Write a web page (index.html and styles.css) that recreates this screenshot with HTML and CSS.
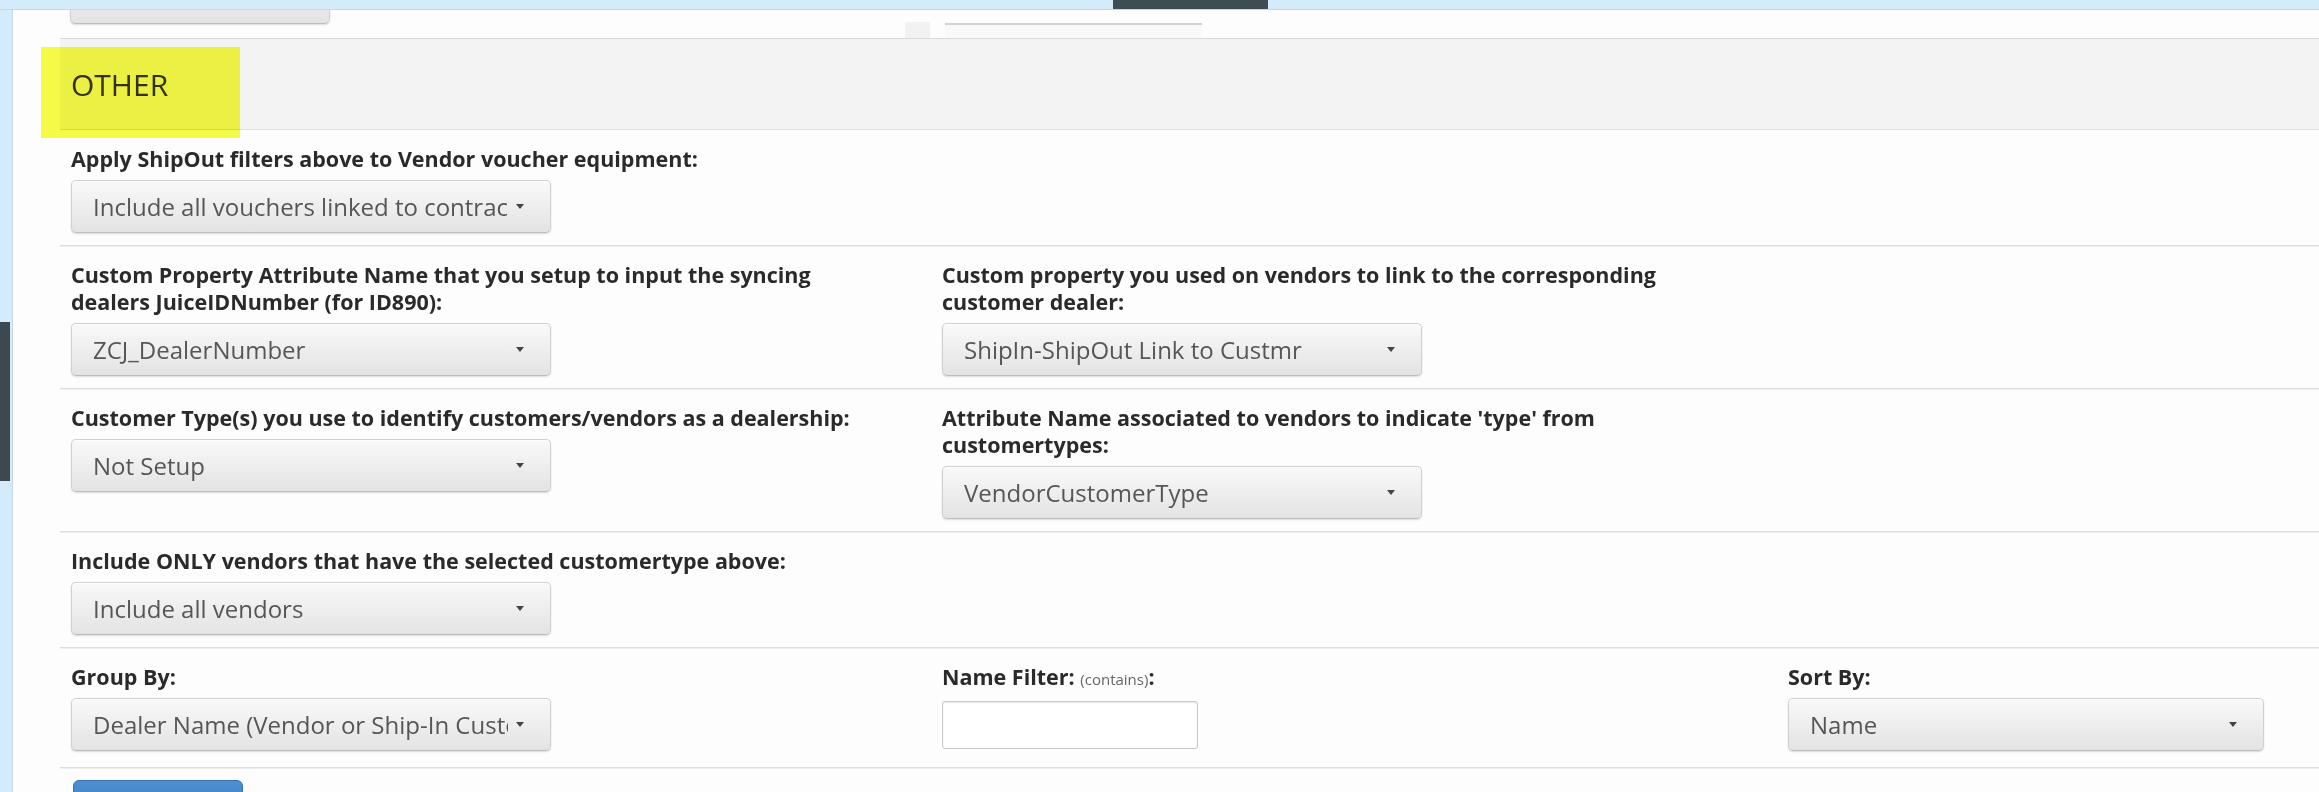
FILE: index.html
```html
<!DOCTYPE html>
<html lang="en">
<head>
<meta charset="utf-8">
<title>Report Filters - Other</title>
<link rel="stylesheet" href="styles.css">
</head>
<body>
  <div class="topbar"><div class="topbar-tab"></div></div>
  <div class="main">
    <div class="gutter"><div class="gutter-block"></div></div>
    <div class="panel">
      <div class="form">

        <div class="row-cut">
          <div class="select cut-select"><span class="caret"></span></div>
          <div class="cut-addon"></div>
          <div class="cut-input"></div>
        </div>

        <div class="section-head">
          <h3 class="section-title">OTHER</h3>
          <span class="marker"></span>
        </div>

        <div class="row">
          <div class="field">
            <label class="label">Apply ShipOut filters above to Vendor voucher equipment:</label>
            <div class="select"><span class="value">Include all vouchers linked to contracts</span><span class="caret"></span></div>
          </div>
        </div>

        <div class="row">
          <div class="field">
            <label class="label">Custom Property Attribute Name that you setup to input the syncing dealers JuiceIDNumber (for ID890):</label>
            <div class="select"><span class="value">ZCJ_DealerNumber</span><span class="caret"></span></div>
          </div>
          <div class="field">
            <label class="label">Custom property you used on vendors to link to the corresponding customer dealer:</label>
            <div class="select"><span class="value">ShipIn-ShipOut Link to Custmr</span><span class="caret"></span></div>
          </div>
        </div>

        <div class="row">
          <div class="field">
            <label class="label">Customer Type(s) you use to identify customers/vendors as a dealership:</label>
            <div class="select"><span class="value">Not Setup</span><span class="caret"></span></div>
          </div>
          <div class="field">
            <label class="label">Attribute Name associated to vendors to indicate 'type' from customertypes:</label>
            <div class="select"><span class="value">VendorCustomerType</span><span class="caret"></span></div>
          </div>
        </div>

        <div class="row">
          <div class="field">
            <label class="label">Include ONLY vendors that have the selected customertype above:</label>
            <div class="select"><span class="value">Include all vendors</span><span class="caret"></span></div>
          </div>
        </div>

        <div class="row row-last">
          <div class="field">
            <label class="label">Group By:</label>
            <div class="select"><span class="value">Dealer Name (Vendor or Ship-In Customer)</span><span class="caret"></span></div>
          </div>
          <div class="field">
            <label class="label">Name Filter: <span class="hint">(contains)</span>:</label>
            <input class="text-input" type="text">
          </div>
          <div class="field">
            <label class="label">Sort By:</label>
            <div class="select select-wide"><span class="value">Name</span><span class="caret"></span></div>
          </div>
        </div>

        <div class="actions"><button class="btn-primary" type="button"></button></div>

      </div>
    </div>
  </div>
</body>
</html>
```

FILE: styles.css
```css
html, body {
  margin: 0;
  padding: 0;
}

body {
  width: 2319px;
  height: 792px;
  overflow: hidden;
  background: #d3ebfa;
  font-family: "Open Sans", "Noto Sans", sans-serif;
  color: #2b2b2b;
}

/* strip across the top of the window */
.topbar {
  height: 9px;
  border-bottom: 1px solid #bfd9ea;
  display: flex;
}

.topbar-tab {
  margin-left: 1113px;
  width: 155px;
  background: #404c54;
}

.main {
  display: flex;
  height: 782px;
}

.gutter {
  width: 12px;
  flex: none;
}

.gutter-block {
  margin-top: 312px;
  width: 10px;
  height: 159px;
  background: #3d4950;
}

.panel {
  flex: 1;
  background: #fdfdfd;
  border-left: 1px solid #c9d7e1;
  padding-left: 47px;
  overflow: hidden;
}

/* group heading */
.section-head {
  position: relative;
  height: 90px;
  background: #f3f3f3;
  border-top: 1px solid #dadada;
  border-bottom: 1px solid #dedede;
  display: flex;
  align-items: center;
  padding-left: 11px;
}

.section-title {
  margin: 0;
  font-size: 30px;
  font-weight: 400;
  color: #333;
}

.marker {
  position: absolute;
  left: -19px;
  top: 8px;
  width: 199px;
  height: 91px;
  background: #f7fc46;
  mix-blend-mode: multiply;
}

/* form rows */
.row {
  display: grid;
  grid-template-columns: 871px 846px 1fr;
  align-items: start;
  padding: 15px 0 12px 11px;
  border-bottom: 1px solid #dedede;
  box-shadow: 0 1px 0 #eeeeee;
}

.row-last {
  padding-bottom: 16px;
}

.field {
  display: flex;
  flex-direction: column;
  align-items: flex-start;
  padding-right: 60px;
}

.label {
  display: block;
  font-size: 21.5px;
  font-weight: 700;
  line-height: 27px;
  color: #2a2a2a;
  margin-bottom: 8px;
}

.hint {
  font-size: 15px;
  font-weight: 400;
  color: #666;
}

/* dropdown button */
.select {
  box-sizing: border-box;
  width: 480px;
  height: 53px;
  display: flex;
  align-items: center;
  padding: 0 26px 0 21px;
  border: 1px solid #d0d0d0;
  border-bottom-color: #bcbcbc;
  border-radius: 5px;
  background: linear-gradient(#f9f9f9, #e3e3e3);
  box-shadow: 0 1px 2px rgba(0, 0, 0, 0.14), inset 0 1px 0 #ffffff;
  color: #565656;
  font-size: 24px;
}

.select-wide {
  width: 476px;
}

.value {
  flex: 1;
  overflow: hidden;
  white-space: nowrap;
  margin-right: 8px;
}

.caret {
  flex: none;
  margin-left: auto;
  width: 0;
  height: 0;
  border-left: 4px solid transparent;
  border-right: 4px solid transparent;
  border-top: 5px solid #444;
}

/* bottom edge of the previous group, scrolled out of view */
.row-cut {
  height: 28px;
  display: flex;
  overflow: hidden;
}

.row-cut .cut-select {
  flex: none;
  margin-left: 10px;
  margin-top: -39px;
  width: 260px;
}

.cut-addon {
  flex: none;
  margin-left: 575px;
  margin-top: 12px;
  width: 25px;
  height: 16px;
  background: #f2f2f2;
}

.cut-input {
  flex: none;
  margin-left: 15px;
  margin-top: 13px;
  width: 257px;
  height: 20px;
  border-top: 2px solid #d2d2d2;
  background: #f9f9f9;
}

.text-input {
  box-sizing: border-box;
  width: 256px;
  height: 48px;
  margin: 0;
  border: 1px solid #c9c9c9;
  border-radius: 3px;
  background: #fff;
  box-shadow: inset 0 1px 2px rgba(0, 0, 0, 0.1);
}

.actions {
  padding: 12px 0 0 13px;
}

.btn-primary {
  display: block;
  width: 170px;
  height: 40px;
  border: 1px solid #3670ae;
  border-radius: 6px;
  background: linear-gradient(#4d8fd0, #3a78bd);
}
```
